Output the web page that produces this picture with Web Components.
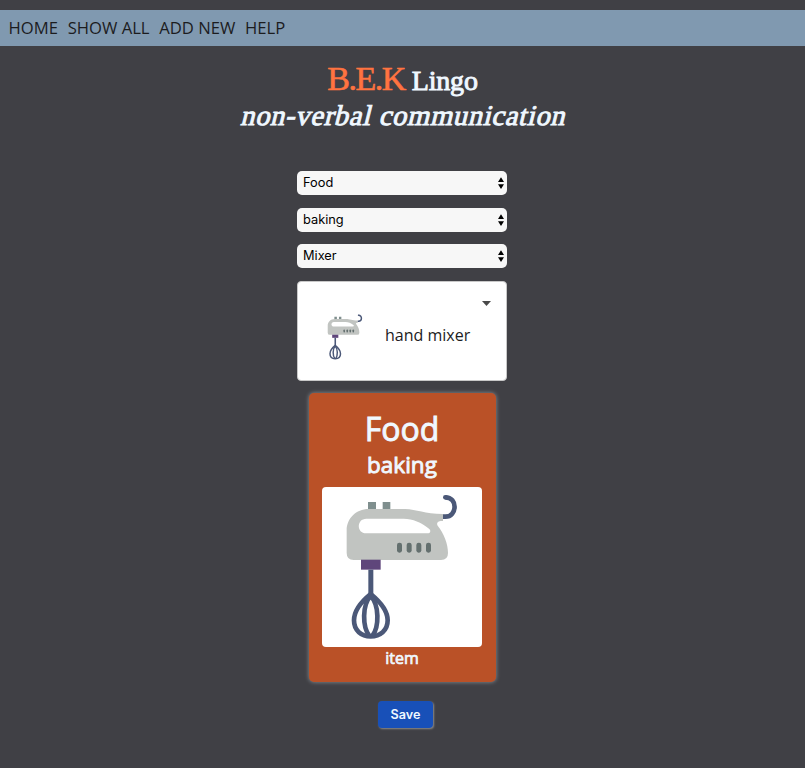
<!DOCTYPE html>
<html lang="en">
<head>
<meta charset="utf-8">
<title>B.E.K Lingo</title>
<style>
html{background:#404045}
body{margin:0;min-height:768px;overflow:hidden;background:#404045;font:16px "Open Sans",sans-serif;color:#1c1c1e}
</style>
</head>
<body>
<lingo-app></lingo-app>
<script>
const define = (name, html) => customElements.define(name, class extends HTMLElement {
  constructor() {
    super();
    this.attachShadow({mode: 'open'}).innerHTML = html;
  }
});

define('nav-bar', `<style>
:host{display:flex;align-items:center;gap:9.7px;height:36px;padding-left:8.5px;background:#8099b0;box-sizing:border-box;font-size:16.65px}
::slotted(span){line-height:36px;white-space:nowrap}
</style><slot></slot>`);

define('brand-title', `<style>
:host{display:block;text-align:center;color:#f0f8ff;font-family:"Liberation Serif",serif;-webkit-text-stroke:.9px currentColor}
h1{margin:0;font-weight:400;font-size:28px;line-height:38px;height:38px;white-space:nowrap}
b{font-weight:400;font-size:34px;color:#ff7340;letter-spacing:-1.5px;-webkit-text-stroke-width:.6px}
.l{letter-spacing:-.2px}
h2{margin:0;font-weight:400;font-size:28.5px;line-height:36px;height:34px;white-space:nowrap;transform:skewX(-14deg);letter-spacing:.72px;padding-left:5px}
</style><h1><b><slot name="mark"></slot></b> <span class="l"><slot name="name"></slot></span></h1><h2><slot name="tagline"></slot></h2>`);

define('select-box', `<style>
:host{display:flex;align-items:center;justify-content:space-between;width:210px;height:24px;box-sizing:border-box;padding:0 3px 0 6px;background:#f7f7f7;border-radius:5px;color:#000;font:12.8px/24px Inter,sans-serif}
span{height:24px}
svg{display:block;width:6px;height:12px}
</style><span><slot></slot></span><svg viewBox="0 0 6 12"><path d="M0 5L3 .3 6 5zM0 7.3h6L3 12z"/></svg>`);

define('hand-mixer', `<style>:host{display:block}svg{display:block;width:100%;height:100%}</style>
<svg viewBox="21 21 480 480">
<path fill="#7f8f8e" d="M159 66h24v24h-24zM203 66h23v24h-23z"/>
<path fill="#c1c4c1" fill-rule="evenodd" d="M160 87H270C306 88 328 102 384 102V123H377C368 124 364 130 368 137C387 160 399 192 399 219Q399 240 378 240H116Q95 240 95 219V151C95 115 124 87 160 87ZM154 116C124 116 124 160 154 160H338C346 160 349 151 342 146C318 127 294 116 266 116Z"/>
<path fill="none" stroke="#4b5878" stroke-width="14" d="M384 110H391C427 110 429 52 391 52"/><circle cx="391" cy="52" r="7" fill="#4b5878"/>
<g fill="#64706f"><rect x="246" y="188" width="15" height="30" rx="7"/><rect x="275" y="188" width="15" height="30" rx="7"/><rect x="304" y="188" width="15" height="30" rx="7"/><rect x="333" y="188" width="15" height="30" rx="7"/></g>
<path fill="#5f467b" d="M138 239h59v30h-59z"/>
<path fill="#4b5878" d="M160 269h15v75h-15z"/>
<g fill="none" stroke="#4b5878" stroke-width="14" stroke-linejoin="round"><path d="M167 342C140 364 117 390 117 421C117 452 139 469 167 469C195 469 218 452 218 421C218 390 194 364 167 342Z"/><path d="M167 348C141 375 142 440 163 468M167 348C193 375 193 440 172 468"/></g>
</svg>`);

define('picture-picker', `<style>
:host{display:flex;position:relative;align-items:center;width:210px;height:100px;box-sizing:border-box;padding:8px 0 0 22px;background:#fff;border:1px solid #c8c8c8;border-radius:4px;color:#1c1c1e}
hand-mixer{width:50px;height:50px;flex:none;margin-top:4px}
span{margin:0 0 0 15px;white-space:nowrap;line-height:24px}
svg{position:absolute;right:15px;top:19px;width:9px;height:5px}
</style><hand-mixer></hand-mixer><span><slot></slot></span><svg viewBox="0 0 9 5"><path fill="#4a4a4a" d="M0 0h9L4.5 5z"/></svg>`);

define('picture-card', `<style>
:host{display:flex;flex-direction:column;align-items:center;width:187px;height:289px;box-sizing:border-box;padding-top:13px;background:#ba5127;border-radius:5px;box-shadow:0 0 4px #8c9298;color:#f0f8ff}
h1,h2,h3{margin:0;font-weight:400;-webkit-text-stroke:.9px currentColor}
h1{font-size:32px;line-height:46px;height:43px}
h2{font-size:22.5px;line-height:32px;height:38px}
.p{width:160px;height:160px;background:#fff;border-radius:4px}
h3{font-size:16px;line-height:23px;-webkit-text-stroke-width:.7px}
</style><h1><slot name="category"></slot></h1><h2><slot name="group"></slot></h2><div class="p"><hand-mixer></hand-mixer></div><h3><slot name="kind"></slot></h3>`);

define('save-button', `<style>
:host{display:block;width:55px;height:27px;background:#1850b8;border-radius:4px;box-shadow:1px 1px 2px #8b8b8b;color:#f0f8ff;font:600 12.6px/27px Inter,sans-serif;text-align:center}
</style><slot></slot>`);

define('lingo-app', `<style>
:host{display:block;padding-top:10px}
brand-title{margin-top:14px}
main{display:flex;flex-direction:column;align-items:center;width:804px;padding-top:39px}
select-box{margin-bottom:13px}
select-box.mid{margin-bottom:12px}
picture-card{margin-top:12px}
save-button{margin:19px 0 0 7px}
</style>
<nav-bar><span>HOME</span><span>SHOW ALL</span><span>ADD NEW</span><span>HELP</span></nav-bar>
<brand-title><span slot="mark">B.E.K</span><span slot="name">Lingo</span><span slot="tagline">non-verbal communication</span></brand-title>
<main>
<select-box>Food</select-box>
<select-box class="mid">baking</select-box>
<select-box>Mixer</select-box>
<picture-picker>hand mixer</picture-picker>
<picture-card><span slot="category">Food</span><span slot="group">baking</span><span slot="kind">item</span></picture-card>
<save-button>Save</save-button>
</main>`);
</script>
</body>
</html>
